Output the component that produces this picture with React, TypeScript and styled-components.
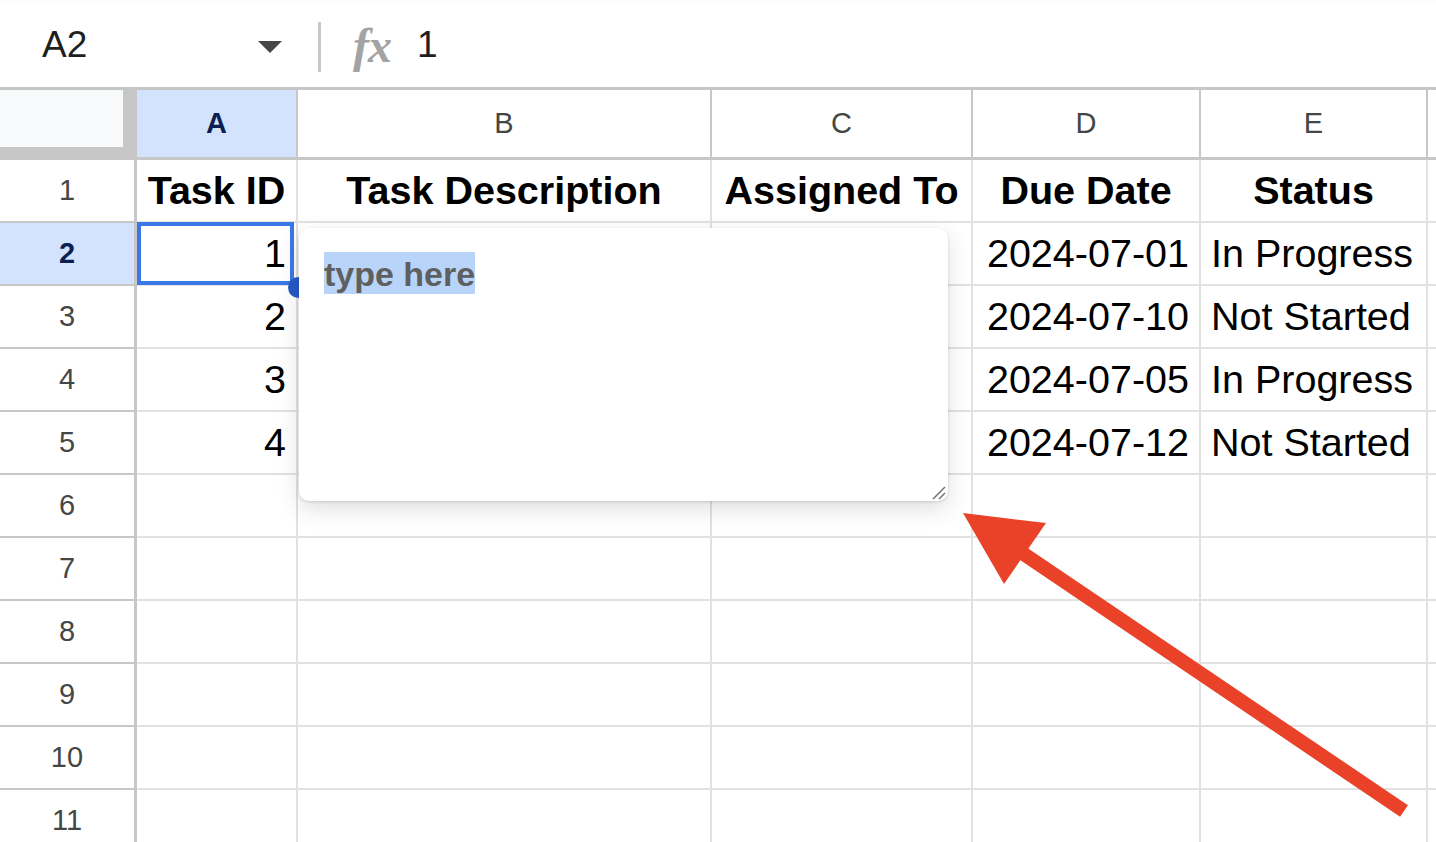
import React from 'react'
import styled, { createGlobalStyle, css } from 'styled-components'

const GlobalStyle = createGlobalStyle`
  html, body {
    margin: 0;
    padding: 0;
    background: #ffffff;
    overflow: hidden;
  }
  body {
    font-family: "Liberation Sans", Arial, sans-serif;
    color: #000;
  }
`

const columns = ['A', 'B', 'C', 'D', 'E', '']

type Align = 'left' | 'center' | 'right'

interface CellData {
  text?: string
  align?: Align
  bold?: boolean
}

const rows: CellData[][] = [
  [
    { text: 'Task ID', align: 'center', bold: true },
    { text: 'Task Description', align: 'center', bold: true },
    { text: 'Assigned To', align: 'center', bold: true },
    { text: 'Due Date', align: 'center', bold: true },
    { text: 'Status', align: 'center', bold: true },
    {},
  ],
  [{ text: '1', align: 'right' }, {}, {}, { text: '2024-07-01', align: 'right' }, { text: 'In Progress' }, {}],
  [{ text: '2', align: 'right' }, {}, {}, { text: '2024-07-10', align: 'right' }, { text: 'Not Started' }, {}],
  [{ text: '3', align: 'right' }, {}, {}, { text: '2024-07-05', align: 'right' }, { text: 'In Progress' }, {}],
  [{ text: '4', align: 'right' }, {}, {}, { text: '2024-07-12', align: 'right' }, { text: 'Not Started' }, {}],
  [{}, {}, {}, {}, {}, {}],
  [{}, {}, {}, {}, {}, {}],
  [{}, {}, {}, {}, {}, {}],
  [{}, {}, {}, {}, {}, {}],
  [{}, {}, {}, {}, {}, {}],
  [{}, {}, {}, {}, {}, {}],
]

const App = () => {
  return (
    <Page>
      <GlobalStyle />
      <TopStrip />
      <Toolbar>
        <NameBox>
          <span>A2</span>
          <svg width="24" height="12" viewBox="0 0 24 12">
            <polygon points="0,0 24,0 12,12" fill="#444746" />
          </svg>
        </NameBox>
        <Divider />
        <FxIcon>fx</FxIcon>
        <FormulaValue>1</FormulaValue>
      </Toolbar>

      <Sheet>
        <Corner>
          <div className="inner" />
        </Corner>
        {columns.map((col, i) => (
          <ColHeader key={i} $selected={col === 'A'}>
            {col}
          </ColHeader>
        ))}

        {rows.map((row, r) => (
          <React.Fragment key={r}>
            <RowHeader $selected={r === 1}>{r + 1}</RowHeader>
            {row.map((cell, c) => (
              <Cell key={c} $align={cell.align || 'left'} $bold={!!cell.bold} $active={r === 1 && c === 0}>
                {cell.text}
              </Cell>
            ))}
          </React.Fragment>
        ))}
      </Sheet>

      <EditorPopup>
        <TypedLine>
          <Selection>type here</Selection>
        </TypedLine>
        <Grip width="14" height="14" viewBox="0 0 14 14">
          <line x1="1" y1="13" x2="13" y2="1" stroke="#6f6f6f" strokeWidth="1.4" />
          <line x1="7" y1="13" x2="13" y2="7" stroke="#6f6f6f" strokeWidth="1.4" />
        </Grip>
      </EditorPopup>

      <ArrowLayer width="1436" height="842" viewBox="0 0 1436 842">
        <line x1="1012" y1="546" x2="1404" y2="811" stroke="#ea4228" strokeWidth="14" />
        <polygon points="963,513 1046,523 1004,584" fill="#ea4228" />
      </ArrowLayer>
    </Page>
  )
}

export default App

const Page = styled.div`
  position: relative;
  width: 1436px;
  height: 842px;
  overflow: hidden;
  background: #ffffff;
`

const TopStrip = styled.div`
  height: 3px;
  background: #f9fbfd;
`

const Toolbar = styled.div`
  display: flex;
  align-items: center;
  height: 87px;
  box-sizing: border-box;
  border-bottom: 3px solid #c4c7c5;
  background: #ffffff;
`

const NameBox = styled.div`
  display: flex;
  align-items: center;
  justify-content: space-between;
  width: 240px;
  margin-left: 42px;
  font-size: 37px;
  color: #1f1f1f;

  svg {
    margin-top: 4px;
  }
`

const Divider = styled.div`
  width: 3px;
  height: 50px;
  margin-left: 36px;
  margin-top: 4px;
  background: #c7c7c7;
`

const FxIcon = styled.span`
  margin-left: 32px;
  font-family: "Liberation Serif", "Times New Roman", serif;
  font-style: italic;
  font-weight: 700;
  font-size: 48px;
  color: #a3a3a3;
  letter-spacing: -1px;
  line-height: 1;
  margin-top: 2px;
`

const FormulaValue = styled.span`
  margin-left: 26px;
  font-size: 37px;
  color: #1f1f1f;
`

const Sheet = styled.div`
  display: grid;
  grid-template-columns: 137px 161px 414px 261px 228px 227px 1fr;
  grid-template-rows: 70px;
  grid-auto-rows: 63px;
`

const Corner = styled.div`
  background: #c7c7c7;
  box-sizing: border-box;

  .inner {
    width: 123px;
    height: 57px;
    background: #f8f9fa;
  }
`

const ColHeader = styled.div<{ $selected: boolean }>`
  display: flex;
  align-items: center;
  justify-content: center;
  box-sizing: border-box;
  border-right: 2px solid #c7c7c7;
  border-bottom: 3px solid #c7c7c7;
  font-size: 29px;
  color: #444746;
  background: #ffffff;

  ${(p) =>
    p.$selected &&
    css`
      background: #d3e3fd;
      color: #0b1f51;
      font-weight: 700;
    `}
`

const RowHeader = styled.div<{ $selected: boolean }>`
  display: flex;
  align-items: center;
  justify-content: center;
  box-sizing: border-box;
  border-right: 3px solid #c7c7c7;
  border-bottom: 2px solid #c7c7c7;
  font-size: 29px;
  color: #444746;
  background: #ffffff;

  ${(p) =>
    p.$selected &&
    css`
      background: #d3e3fd;
      color: #0b1f51;
      font-weight: 700;
    `}
`

const Cell = styled.div<{ $align: Align; $bold: boolean; $active: boolean }>`
  position: relative;
  display: flex;
  align-items: center;
  justify-content: ${(p) =>
    p.$align === 'right' ? 'flex-end' : p.$align === 'center' ? 'center' : 'flex-start'};
  padding: 0 10px;
  box-sizing: border-box;
  border-right: 2px solid #e1e1e1;
  border-bottom: 2px solid #e1e1e1;
  font-size: 39.5px;
  font-weight: ${(p) => (p.$bold ? 700 : 400)};
  color: #000;
  white-space: nowrap;
  overflow: hidden;

  ${(p) =>
    p.$active &&
    css`
      overflow: visible;
      z-index: 1;

      &::after {
        content: '';
        position: absolute;
        top: -1px;
        left: 0;
        right: 2px;
        bottom: -1px;
        border: 4px solid #3b78e7;
      }

      &::before {
        content: '';
        position: absolute;
        left: 151px;
        top: 54px;
        width: 21px;
        height: 21px;
        border-radius: 50%;
        background: #2458c8;
        z-index: 2;
      }
    `}
`

const EditorPopup = styled.div`
  position: absolute;
  top: 228px;
  left: 299px;
  width: 649px;
  height: 273px;
  box-sizing: border-box;
  display: flex;
  flex-direction: column;
  background: #ffffff;
  border-radius: 10px;
  box-shadow: 0 1px 3px rgba(60, 64, 67, 0.18), 0 8px 22px rgba(60, 64, 67, 0.16);
  z-index: 5;
`

const TypedLine = styled.div`
  margin: 24px 0 0 25px;
  line-height: 42px;
`

const Selection = styled.span`
  display: inline-block;
  height: 42px;
  line-height: 44px;
  background: #b8d4f9;
  color: #5f5f5f;
  font-size: 34px;
  font-weight: 700;
`

const Grip = styled.svg`
  margin: auto 2px 1px auto;
`

const ArrowLayer = styled.svg`
  position: absolute;
  top: 0;
  left: 0;
  pointer-events: none;
  z-index: 10;
`
